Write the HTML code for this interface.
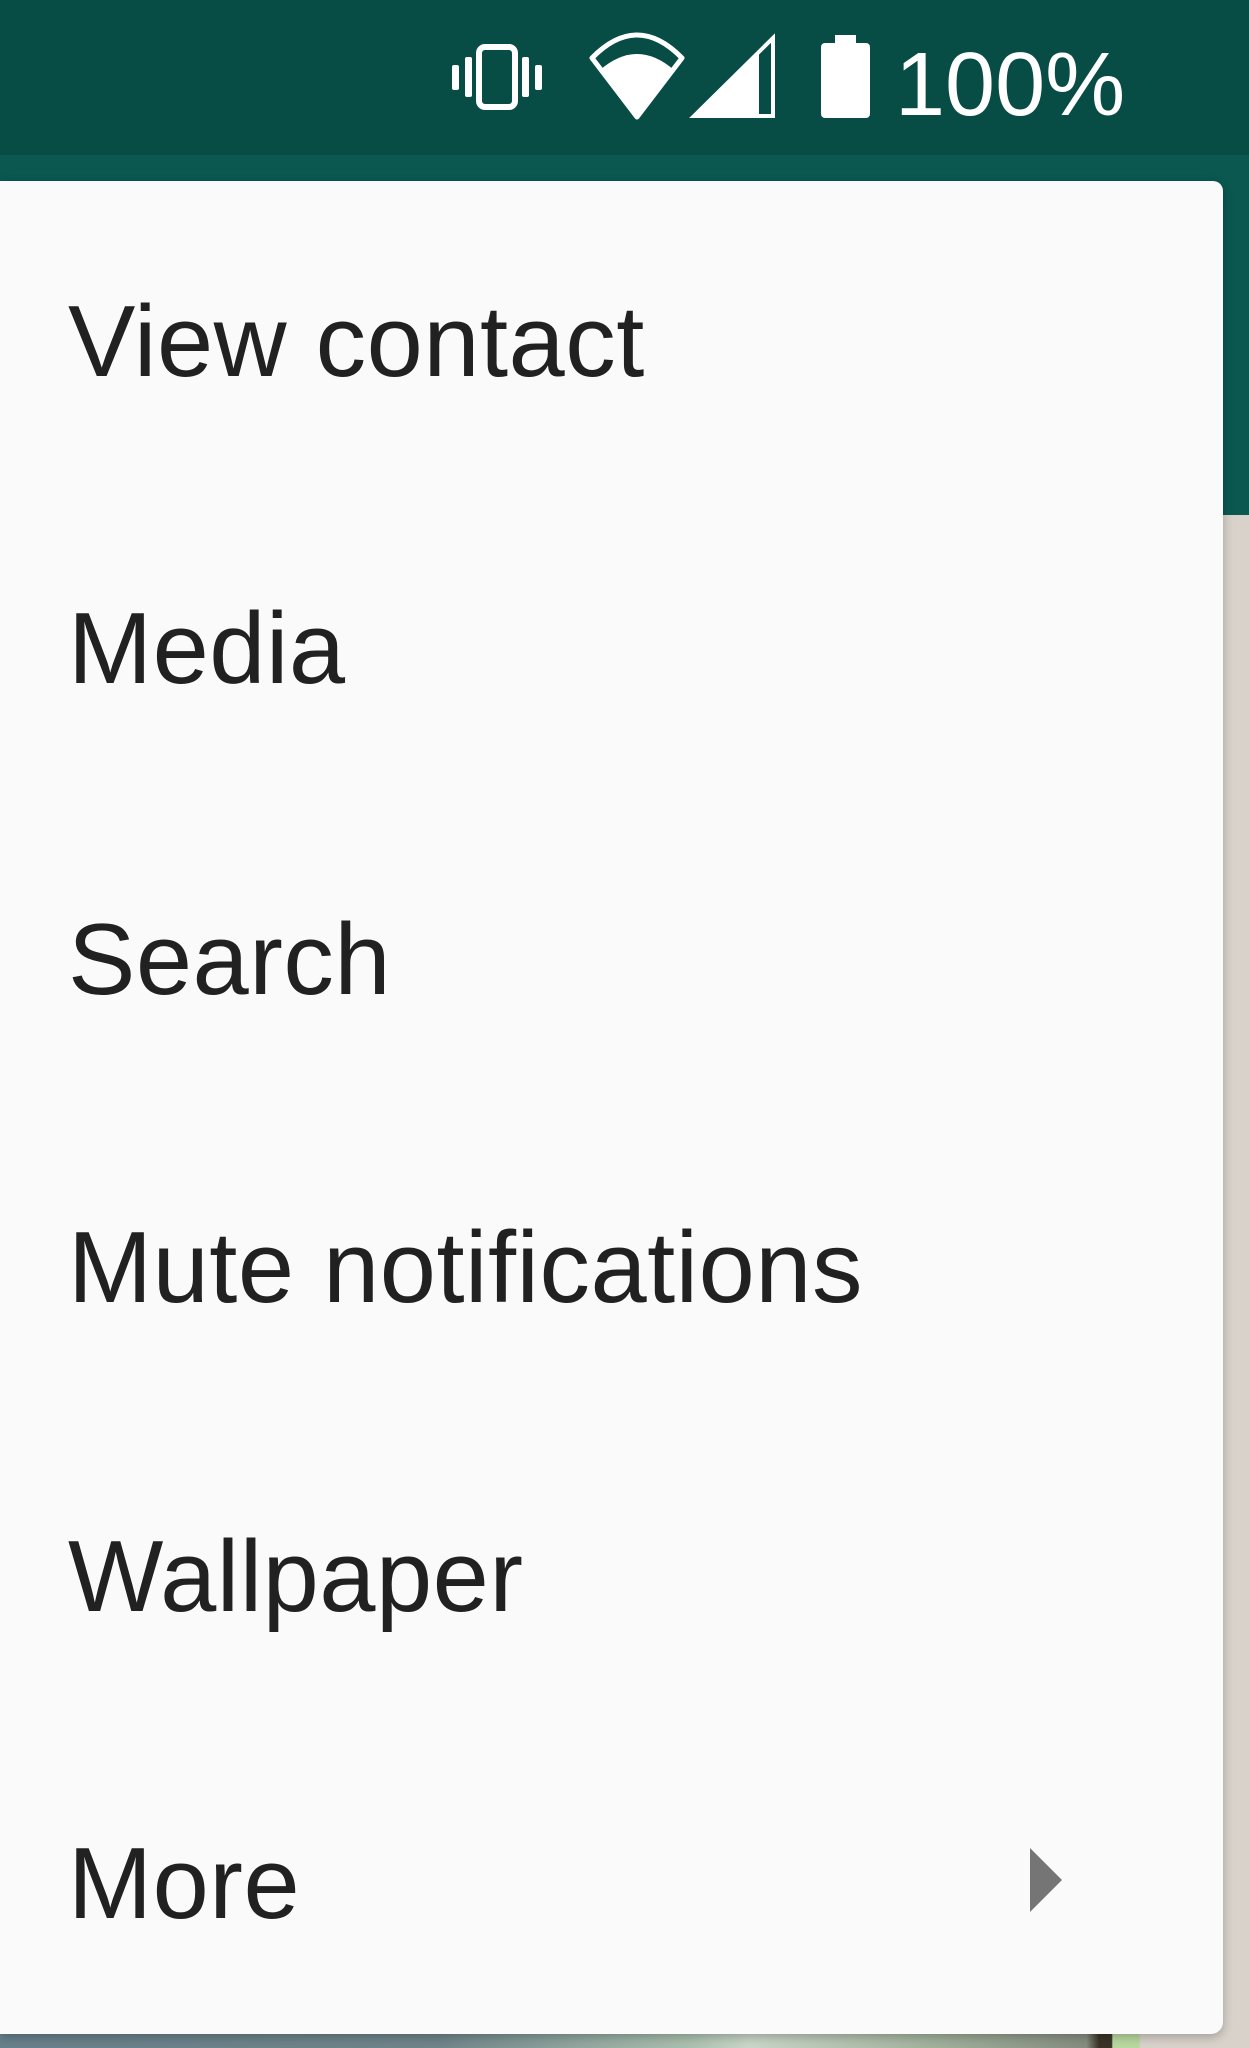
<!DOCTYPE html>
<html><head><meta charset="utf-8"><style>
html,body{margin:0;padding:0;width:1249px;height:2048px;overflow:hidden;background:#d8d2cb;font-family:"Liberation Sans",Roboto,sans-serif}
#sb{position:absolute;left:0;top:0;width:1249px;height:155px;background:#074d45}
#tb{position:absolute;left:0;top:155px;width:1249px;height:360px;background:#0a5850}
#bot{position:absolute;left:0;top:2030px;width:1249px;height:18px;background:linear-gradient(90deg,#67808a 0%,#6f8489 35%,#a9bfae 55%,#c9d6c8 60%,#9fb09a 75%,#858c80 87%,#3a3226 88%,#3a3226 89%,#b8d8a0 89.1%,#b8d8a0 91.2%,#d8d2cb 91.3%)}
#menu{position:absolute;left:0;top:181px;width:1223px;height:1853px;background:#fafafa;border-radius:0 10px 12px 0;box-shadow:0 3px 10px rgba(0,0,0,.25)}
.it{position:absolute;left:68px;font-size:101px;color:#212121;line-height:1;letter-spacing:0.5px}
</style></head><body>
<div id="sb"></div><div id="tb"></div><div id="bot"></div>
<svg style="position:absolute;left:0;top:0" width="1249" height="155">
<g fill="#fff">
<rect x="479" y="47" width="36" height="60" rx="6" fill="none" stroke="#fff" stroke-width="6"/>
<rect x="465" y="57" width="7" height="40" rx="2"/><rect x="522" y="57" width="7" height="40" rx="2"/>
<rect x="452" y="65" width="7" height="25" rx="2"/><rect x="535" y="65" width="7" height="25" rx="2"/>
<path d="M592 58 Q637 12 682 58 L637 117 Z" fill="none" stroke="#fff" stroke-width="5" stroke-linejoin="round"/>
<path d="M600 70 Q637 38 674 70 L637 117 Z"/>
<path d="M694 116 L773 38 L773 116 Z" fill="none" stroke="#fff" stroke-width="4"/>
<path d="M694 117 L759 52 L759 117 Z"/>
<rect x="821" y="43" width="49" height="75" rx="4"/><rect x="835" y="35" width="21" height="10"/>
<text x="895" y="115" font-size="90" font-family="Liberation Sans,sans-serif" fill="#fff">100%</text>
</g>
</svg>
<div id="menu"></div>
<div class="it" style="top:292px">View contact</div>
<div class="it" style="top:599px">Media</div>
<div class="it" style="top:910px">Search</div>
<div class="it" style="top:1218px">Mute notifications</div>
<div class="it" style="top:1527px">Wallpaper</div>
<div class="it" style="top:1834px">More</div>
<svg style="position:absolute;left:1028px;top:1846px" width="36" height="68"><path d="M2 2 L34 34 L2 66 Z" fill="#757575"/></svg>
</body></html>
